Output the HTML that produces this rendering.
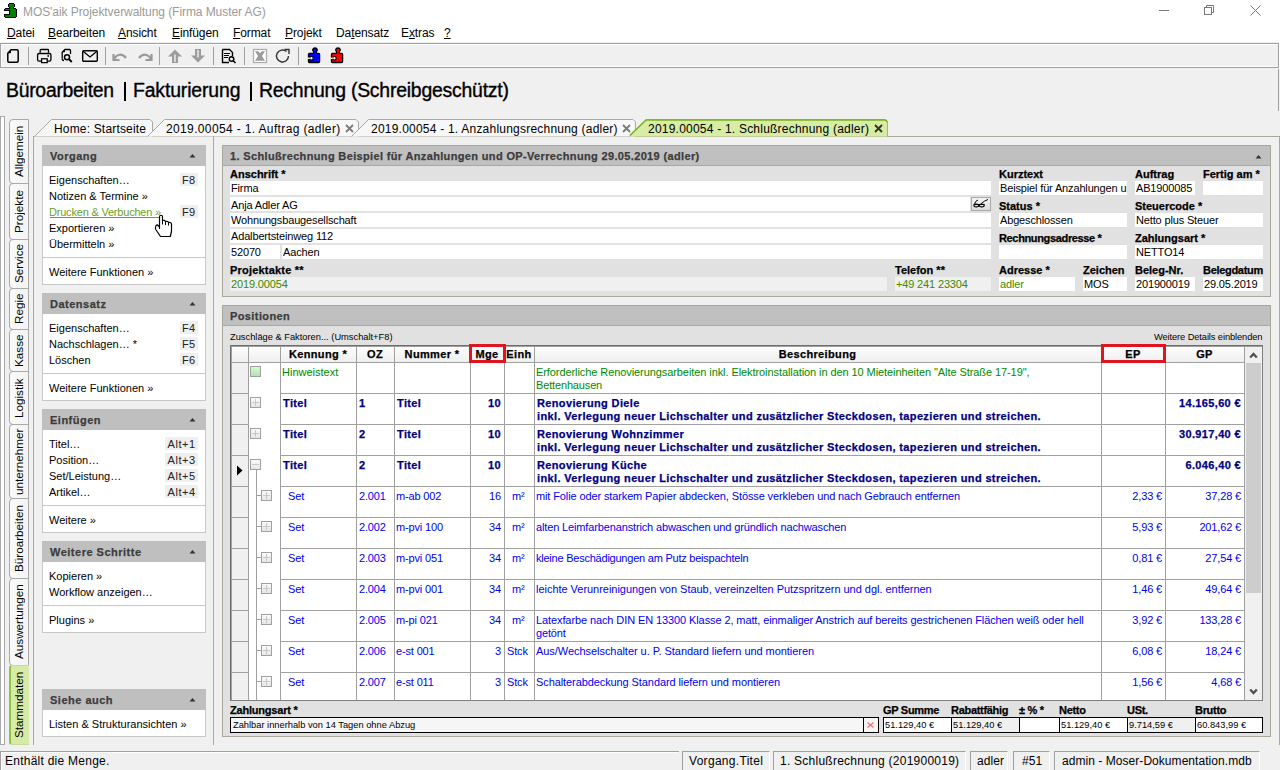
<!DOCTYPE html>
<html><head><meta charset="utf-8"><title>MOS'aik</title>
<style>
*{margin:0;padding:0;box-sizing:border-box}
html,body{width:1280px;height:770px;overflow:hidden}
body{background:#f0f0f0;font-family:"Liberation Sans",sans-serif;position:relative}
.a{position:absolute}
.t{position:absolute;white-space:nowrap}
.t[style*="font-weight:bold"]{-webkit-text-stroke-width:0.25px}
svg{position:absolute;overflow:visible}
</style></head><body>

<div class="a" style="left:0px;top:0px;width:1280px;height:42px;background:#fff"></div>
<svg style="left:3px;top:2px" width="15" height="17" viewBox="0 0 15 17" shape-rendering="crispEdges"><path d="M6 1H11V2H12V5H11V6H13V7H14V15H13V16H2V15H1V12H6V9H1V7H2V6H6V5H5V2H6z" fill="#000"/><path d="M6 2H11V5H10V7H13V15H2V13H7V8H2V7H7V5H6z" fill="#008000"/></svg>
<div class="t " style="left:23px;top:6px;font-size:12px;line-height:12px;color:#9a9a9a;letter-spacing:-0.07px">MOS'aik Projektverwaltung (Firma Muster AG)</div>
<div class="a" style="left:1159px;top:10px;width:10px;height:1px;background:#777"></div>
<svg style="left:1203px;top:4px" width="12" height="12"><rect x="1.5" y="3.5" width="7" height="7" fill="none" stroke="#777"/><path d="M3.5 3.5v-2h7v7h-2" fill="none" stroke="#777"/></svg>
<svg style="left:1250px;top:5px" width="12" height="12"><path d="M0.5 0.5l10 10M10.5 0.5l-10 10" stroke="#777" stroke-width="1"/></svg>
<div class="t " style="left:7px;top:27px;font-size:12px;line-height:12px;color:#000;letter-spacing:-0.1px"><u>D</u>atei</div>
<div class="t " style="left:48px;top:27px;font-size:12px;line-height:12px;color:#000;letter-spacing:-0.1px"><u>B</u>earbeiten</div>
<div class="t " style="left:118px;top:27px;font-size:12px;line-height:12px;color:#000;letter-spacing:-0.1px"><u>A</u>nsicht</div>
<div class="t " style="left:172px;top:27px;font-size:12px;line-height:12px;color:#000;letter-spacing:-0.1px"><u>E</u>infügen</div>
<div class="t " style="left:233px;top:27px;font-size:12px;line-height:12px;color:#000;letter-spacing:-0.1px"><u>F</u>ormat</div>
<div class="t " style="left:285px;top:27px;font-size:12px;line-height:12px;color:#000;letter-spacing:-0.1px"><u>P</u>rojekt</div>
<div class="t " style="left:336px;top:27px;font-size:12px;line-height:12px;color:#000;letter-spacing:-0.1px">Da<u>t</u>ensatz</div>
<div class="t " style="left:401px;top:27px;font-size:12px;line-height:12px;color:#000;letter-spacing:-0.1px">E<u>x</u>tras</div>
<div class="t " style="left:444px;top:27px;font-size:12px;line-height:12px;color:#000;letter-spacing:-0.1px"><u>?</u></div>
<div class="a" style="left:0px;top:43px;width:1280px;height:25px;background:#f0f0f0;border-top:1px solid #a0a0a0;border-bottom:1px solid #a0a0a0;border-left:1px solid #a0a0a0"></div>
<div class="a" style="left:1px;top:44px;width:1279px;height:23px;border-top:1px solid #fff;border-left:1px solid #fff;border-bottom:1px solid #fff"></div>
<div class="a" style="left:1278px;top:43px;width:1px;height:25px;background:#a0a0a0"></div>
<div class="a" style="left:1279px;top:43px;width:1px;height:25px;background:#fff"></div>
<div class="a" style="left:1278px;top:69px;width:1px;height:42px;background:#a0a0a0"></div>
<div class="a" style="left:28px;top:47px;width:1px;height:18px;background:#a0a0a0"></div>
<div class="a" style="left:105px;top:47px;width:1px;height:18px;background:#a0a0a0"></div>
<div class="a" style="left:159px;top:47px;width:1px;height:18px;background:#a0a0a0"></div>
<div class="a" style="left:213px;top:47px;width:1px;height:18px;background:#a0a0a0"></div>
<div class="a" style="left:244px;top:47px;width:1px;height:18px;background:#a0a0a0"></div>
<div class="a" style="left:298px;top:47px;width:1px;height:18px;background:#a0a0a0"></div>
<svg style="left:6px;top:48px" width="14" height="16" viewBox="0 0 14 16"><path d="M5 1.8h6c0.7 0 1.2 0.5 1.2 1.2v10c0 0.7-0.5 1.2-1.2 1.2h-8c-0.7 0-1.2-0.5-1.2-1.2v-7.8z" fill="none" stroke="#000" stroke-width="1.5" stroke-linejoin="round"/><path d="M1.8 5.2l3.2-3.4v2.4c0 0.6-0.4 1-1 1z" fill="#000"/></svg>
<svg style="left:36px;top:48px" width="16" height="16" viewBox="0 0 16 16"><path d="M4.2 4.8V2.2Q4.2 1.5 5 1.5H11.7Q12.5 1.5 12.5 2.2V4.8" fill="none" stroke="#000" stroke-width="1.3"/><rect x="1.6" y="5.5" width="13.3" height="7.6" rx="1.4" fill="none" stroke="#000" stroke-width="1.3"/><rect x="5.6" y="10.8" width="5.6" height="3.8" fill="#fff" stroke="#000" stroke-width="1.3"/><circle cx="12.2" cy="7.9" r="0.9" fill="#000"/></svg>
<svg style="left:60px;top:48px" width="14" height="16" viewBox="0 0 14 16"><path d="M2.2 10.5V4.3L5 1.5H9.5Q10.5 1.5 10.5 2.5V6" fill="none" stroke="#000" stroke-width="1.3"/><path d="M2.2 4.3L5 1.5V3.5Q5 4.3 4.2 4.3z" fill="#000"/><path d="M2.2 10.5Q2.2 12.5 4 12.5" fill="none" stroke="#000" stroke-width="1.3"/><circle cx="7" cy="9.2" r="2.5" fill="none" stroke="#000" stroke-width="1.5"/><path d="M8.8 11l3 3" stroke="#000" stroke-width="1.8"/></svg>
<svg style="left:81px;top:49px" width="18" height="14" viewBox="0 0 18 14"><rect x="1.7" y="1.7" width="14.6" height="10.6" rx="1" fill="none" stroke="#000" stroke-width="1.4"/><path d="M2 2.2l7 5.8 7-5.8" fill="none" stroke="#000" stroke-width="1.3"/></svg>
<svg style="left:112px;top:50px" width="18" height="12" viewBox="0 0 18 12"><path d="M2 9c3-5 8-6 12-1" fill="none" stroke="#999" stroke-width="2.2"/><path d="M1.5 4v6h6" fill="none" stroke="#999" stroke-width="2.2"/></svg>
<svg style="left:135px;top:50px" width="18" height="12" viewBox="0 0 18 12"><path d="M16 9c-3-5-8-6-12-1" fill="none" stroke="#999" stroke-width="2.2"/><path d="M16.5 4v6h-6" fill="none" stroke="#999" stroke-width="2.2"/></svg>
<svg style="left:167px;top:48px" width="16" height="16" viewBox="0 0 16 16"><path d="M1 8.5L8 1.5L15 8.5H11V15H5V8.5z" fill="#9c9c9c"/><path d="M8 6.5V14" stroke="#fff" stroke-width="1.2"/></svg>
<svg style="left:190px;top:48px" width="16" height="16" viewBox="0 0 16 16"><path d="M1 7.5L8 14.5L15 7.5H11V1H5V7.5z" fill="#9c9c9c"/><path d="M8 2V9.5" stroke="#fff" stroke-width="1.2"/></svg>
<svg style="left:221px;top:48px" width="16" height="16" viewBox="0 0 16 16"><path d="M1.5 1.5h7l3 3v3.5M8 14.5h-6.5v-13" fill="none" stroke="#000" stroke-width="1.4"/><path d="M3 5.5h6M3 7.5h5M3 9.5h4" stroke="#000" stroke-width="1"/><circle cx="10.5" cy="11" r="2.3" fill="none" stroke="#000" stroke-width="1.4"/><path d="M12 12.5l2.5 2.5" stroke="#000" stroke-width="1.6"/></svg>
<svg style="left:252px;top:48px" width="16" height="16" viewBox="0 0 16 16"><rect x="1.5" y="1.5" width="13" height="13" fill="#fff" stroke="#aaa" stroke-width="1.2"/><path d="M3 3.2H6.3L8 5.3L9.7 3.2H13L10 8L13 12.8H3L6 8z" fill="#9c9c9c"/></svg>
<svg style="left:275px;top:48px" width="16" height="16" viewBox="0 0 16 16"><path d="M13.5 8a6 6 0 1 1-2-4.5" fill="none" stroke="#333" stroke-width="1.4"/><path d="M9.5 1.5h4.5v4.5" fill="none" stroke="#333" stroke-width="1.4"/></svg>
<svg style="left:307px;top:47px" width="14" height="17" viewBox="0 0 14 17"><path d="M6.6 4.6C5.2 3.6 5.4 1 8 1S10.8 3.6 9.4 4.6V6.3H11.5Q12.6 6.3 12.6 7.4V14.4Q12.6 15.5 11.5 15.5H2.6Q1.5 15.5 1.5 14.4V7.4Q1.5 6.3 2.6 6.3H6.6z" fill="#0000ff" stroke="#000" stroke-width="1.3" stroke-linejoin="round"/><circle cx="4.4" cy="11.3" r="1.8" fill="#fff" stroke="#000" stroke-width="1.2"/><path d="M0.6 11.3H2.8" stroke="#fff" stroke-width="1.5"/></svg>
<svg style="left:330px;top:47px" width="14" height="17" viewBox="0 0 14 17"><path d="M6.6 4.6C5.2 3.6 5.4 1 8 1S10.8 3.6 9.4 4.6V6.3H11.5Q12.6 6.3 12.6 7.4V14.4Q12.6 15.5 11.5 15.5H2.6Q1.5 15.5 1.5 14.4V7.4Q1.5 6.3 2.6 6.3H6.6z" fill="#ff0000" stroke="#000" stroke-width="1.3" stroke-linejoin="round"/><circle cx="4.4" cy="11.3" r="1.8" fill="#fff" stroke="#000" stroke-width="1.2"/><path d="M0.6 11.3H2.8" stroke="#fff" stroke-width="1.5"/></svg>
<div class="t" style="left:6px;top:81px;font-size:19.4px;line-height:19.4px;color:#000;-webkit-text-stroke:0.35px #000;letter-spacing:-0.27px">Büroarbeiten</div>
<div class="a" style="left:124px;top:82px;width:2px;height:19px;background:#000"></div>
<div class="t" style="left:133px;top:81px;font-size:19.4px;line-height:19.4px;color:#000;-webkit-text-stroke:0.35px #000;letter-spacing:-0.13px">Fakturierung</div>
<div class="a" style="left:250px;top:82px;width:2px;height:19px;background:#000"></div>
<div class="t" style="left:259px;top:81px;font-size:19.4px;line-height:19.4px;color:#000;-webkit-text-stroke:0.35px #000;letter-spacing:-0.21px">Rechnung (Schreibgeschützt)</div>
<div class="a" style="left:0px;top:116px;width:5px;height:629px;border:1px solid #a8a8a8;background:#fff"></div>
<div class="a" style="left:33px;top:136px;width:1px;height:608px;background:#aca899"></div>
<div class="a" style="left:9px;top:119px;width:20px;height:65px;border:1px solid #a9a9a9;border-radius:4px 0 0 4px;background:linear-gradient(to right,#fafafa,#f3f3f3)"></div>
<div class="t" style="left:9px;top:119px;width:20px;height:65px;writing-mode:vertical-rl;transform:rotate(180deg);font-size:11.7px;line-height:20px;text-align:center;color:#000">Allgemein</div>
<div class="a" style="left:9px;top:183px;width:20px;height:57px;border:1px solid #a9a9a9;border-radius:4px 0 0 4px;background:linear-gradient(to right,#fafafa,#f3f3f3)"></div>
<div class="t" style="left:9px;top:183px;width:20px;height:57px;writing-mode:vertical-rl;transform:rotate(180deg);font-size:11.7px;line-height:20px;text-align:center;color:#000">Projekte</div>
<div class="a" style="left:9px;top:239px;width:20px;height:50px;border:1px solid #a9a9a9;border-radius:4px 0 0 4px;background:linear-gradient(to right,#fafafa,#f3f3f3)"></div>
<div class="t" style="left:9px;top:239px;width:20px;height:50px;writing-mode:vertical-rl;transform:rotate(180deg);font-size:11.7px;line-height:20px;text-align:center;color:#000">Service</div>
<div class="a" style="left:9px;top:288px;width:20px;height:42px;border:1px solid #a9a9a9;border-radius:4px 0 0 4px;background:linear-gradient(to right,#fafafa,#f3f3f3)"></div>
<div class="t" style="left:9px;top:288px;width:20px;height:42px;writing-mode:vertical-rl;transform:rotate(180deg);font-size:11.7px;line-height:20px;text-align:center;color:#000">Regie</div>
<div class="a" style="left:9px;top:329px;width:20px;height:43px;border:1px solid #a9a9a9;border-radius:4px 0 0 4px;background:linear-gradient(to right,#fafafa,#f3f3f3)"></div>
<div class="t" style="left:9px;top:329px;width:20px;height:43px;writing-mode:vertical-rl;transform:rotate(180deg);font-size:11.7px;line-height:20px;text-align:center;color:#000">Kasse</div>
<div class="a" style="left:9px;top:371px;width:20px;height:54px;border:1px solid #a9a9a9;border-radius:4px 0 0 4px;background:linear-gradient(to right,#fafafa,#f3f3f3)"></div>
<div class="t" style="left:9px;top:371px;width:20px;height:54px;writing-mode:vertical-rl;transform:rotate(180deg);font-size:11.7px;line-height:20px;text-align:center;color:#000">Logistik</div>
<div class="a" style="left:9px;top:424px;width:20px;height:75px;border:1px solid #a9a9a9;border-radius:4px 0 0 4px;background:linear-gradient(to right,#fafafa,#f3f3f3)"></div>
<div class="t" style="left:9px;top:424px;width:20px;height:75px;writing-mode:vertical-rl;transform:rotate(180deg);font-size:11.7px;line-height:20px;text-align:center;color:#000">unternehmer</div>
<div class="a" style="left:9px;top:498px;width:20px;height:81px;border:1px solid #a9a9a9;border-radius:4px 0 0 4px;background:linear-gradient(to right,#fafafa,#f3f3f3)"></div>
<div class="t" style="left:9px;top:498px;width:20px;height:81px;writing-mode:vertical-rl;transform:rotate(180deg);font-size:11.7px;line-height:20px;text-align:center;color:#000">Büroarbeiten</div>
<div class="a" style="left:9px;top:578px;width:20px;height:88px;border:1px solid #a9a9a9;border-radius:4px 0 0 4px;background:linear-gradient(to right,#fafafa,#f3f3f3)"></div>
<div class="t" style="left:9px;top:578px;width:20px;height:88px;writing-mode:vertical-rl;transform:rotate(180deg);font-size:11.7px;line-height:20px;text-align:center;color:#000">Auswertungen</div>
<div class="a" style="left:9px;top:665px;width:20px;height:80px;border:1px solid #c8dc98;border-left:2px solid #8cc63f;border-right:0;border-radius:3px 0 0 3px;background:#d8eaa8"></div>
<div class="t" style="left:9px;top:665px;width:20px;height:80px;writing-mode:vertical-rl;transform:rotate(180deg);font-size:11.7px;line-height:20px;text-align:center;color:#000">Stammdaten</div>
<div class="a" style="left:34px;top:136px;width:1245px;height:1px;background:#aca899"></div>
<div class="a" style="left:1279px;top:136px;width:1px;height:609px;background:#aca899"></div>
<svg style="left:34px;top:119px" width="120" height="18"><path d="M0.5 17.5 L17.5 0.5 H116 L118.5 3 V17.5" fill="#f7f7f7" stroke="#a9a9a9" stroke-width="1"/></svg>
<div class="t " style="left:54px;top:123px;font-size:12px;line-height:12px;color:#000;letter-spacing:0.17px">Home: Startseite</div>
<svg style="left:147px;top:119px" width="213" height="18"><path d="M0.5 17.5 L17.5 0.5 H209 L211.5 3 V17.5" fill="#f7f7f7" stroke="#a9a9a9" stroke-width="1"/></svg>
<div class="t " style="left:166px;top:123px;font-size:12px;line-height:12px;color:#000;letter-spacing:0.36px">2019.00054 - 1. Auftrag (adler)</div>
<svg style="left:345px;top:124px" width="9" height="9"><path d="M1 1l7 7M8 1l-7 7" stroke="#7a7a7a" stroke-width="1.8"/></svg>
<svg style="left:351px;top:119px" width="286" height="18"><path d="M0.5 17.5 L17.5 0.5 H282 L284.5 3 V17.5" fill="#f7f7f7" stroke="#a9a9a9" stroke-width="1"/></svg>
<div class="t " style="left:371px;top:123px;font-size:12px;line-height:12px;color:#000;letter-spacing:0.22px">2019.00054 - 1. Anzahlungsrechnung (adler)</div>
<svg style="left:622px;top:124px" width="9" height="9"><path d="M1 1l7 7M8 1l-7 7" stroke="#7a7a7a" stroke-width="1.8"/></svg>
<svg style="left:629px;top:119px" width="260" height="18"><path d="M0.5 17.5 L17.5 0.5 H256 L258.5 3 V17.5" fill="#d8eca4" stroke="#a9a9a9" stroke-width="1"/><path d="M0.8 16.5 L17 1 H256.5 L258.5 3" fill="none" stroke="#78b41e" stroke-width="1.6"/></svg>
<div class="t " style="left:648px;top:123px;font-size:12px;line-height:12px;color:#000;letter-spacing:0.22px">2019.00054 - 1. Schlußrechnung (adler)</div>
<svg style="left:874px;top:124px" width="9" height="9"><path d="M1 1l7 7M8 1l-7 7" stroke="#333" stroke-width="1.9"/></svg>
<div class="a" style="left:33px;top:136px;width:1px;height:609px;background:#aca899"></div>
<div class="a" style="left:0px;top:751px;width:679px;height:19px;background:#f0f0f0;border-top:1px solid #a0a0a0;border-left:1px solid #a0a0a0"></div>
<div class="a" style="left:1px;top:752px;width:677px;height:18px;border-top:1px solid #fff;border-left:1px solid #fff"></div>
<div class="t " style="left:5px;top:755px;font-size:12px;line-height:12px;color:#000;letter-spacing:0.25px">Enthält die Menge.</div>
<div class="a" style="left:682px;top:751px;width:88px;height:19px;border-top:1px solid #a0a0a0;border-left:1px solid #a0a0a0;border-right:1px solid #fff;background:#f0f0f0"></div>
<div class="t " style="left:689px;top:755px;font-size:12px;line-height:12px;color:#000;letter-spacing:0.3px">Vorgang.Titel</div>
<div class="a" style="left:773px;top:751px;width:193px;height:19px;border-top:1px solid #a0a0a0;border-left:1px solid #a0a0a0;border-right:1px solid #fff;background:#f0f0f0"></div>
<div class="t " style="left:780px;top:755px;font-size:12px;line-height:12px;color:#000;letter-spacing:0.25px">1. Schlußrechnung (201900019)</div>
<div class="a" style="left:970px;top:751px;width:38px;height:19px;border-top:1px solid #a0a0a0;border-left:1px solid #a0a0a0;border-right:1px solid #fff;background:#f0f0f0"></div>
<div class="t " style="left:977px;top:755px;font-size:12px;line-height:12px;color:#000;letter-spacing:0.1px">adler</div>
<div class="a" style="left:1013px;top:751px;width:37px;height:19px;border-top:1px solid #a0a0a0;border-left:1px solid #a0a0a0;border-right:1px solid #fff;background:#f0f0f0"></div>
<div class="t " style="left:1022px;top:755px;font-size:12px;line-height:12px;color:#000;letter-spacing:0.1px">#51</div>
<div class="a" style="left:1054px;top:751px;width:206px;height:19px;border-top:1px solid #a0a0a0;border-left:1px solid #a0a0a0;border-right:1px solid #fff;background:#f0f0f0"></div>
<div class="t " style="left:1062px;top:755px;font-size:12px;line-height:12px;color:#000;letter-spacing:0.05px">admin - Moser-Dokumentation.mdb</div>
<div class="a" style="left:213px;top:136px;width:1px;height:609px;background:#aca899"></div>
<div class="a" style="left:42px;top:166px;width:164px;height:119px;background:#fff;border:1px solid #c8c8c8;border-top:0"></div>
<div class="a" style="left:42px;top:314px;width:164px;height:87px;background:#fff;border:1px solid #c8c8c8;border-top:0"></div>
<div class="a" style="left:42px;top:430px;width:164px;height:103px;background:#fff;border:1px solid #c8c8c8;border-top:0"></div>
<div class="a" style="left:42px;top:562px;width:164px;height:71px;background:#fff;border:1px solid #c8c8c8;border-top:0"></div>
<div class="a" style="left:42px;top:710px;width:164px;height:27px;background:#fff;border:1px solid #c8c8c8;border-top:0"></div>
<div class="a" style="left:42px;top:145px;width:164px;height:21px;background:#bfbfbf"></div>
<div class="a" style="left:180px;top:173px;width:18px;height:13px;background:#efefef"></div>
<div class="a" style="left:180px;top:205px;width:18px;height:13px;background:#efefef"></div>
<div class="a" style="left:42px;top:257px;width:164px;height:1px;background:#c8c8c8"></div>
<div class="a" style="left:42px;top:293px;width:164px;height:21px;background:#bfbfbf"></div>
<div class="a" style="left:180px;top:321px;width:18px;height:13px;background:#efefef"></div>
<div class="a" style="left:180px;top:337px;width:18px;height:13px;background:#efefef"></div>
<div class="a" style="left:180px;top:353px;width:18px;height:13px;background:#efefef"></div>
<div class="a" style="left:42px;top:373px;width:164px;height:1px;background:#c8c8c8"></div>
<div class="a" style="left:42px;top:409px;width:164px;height:21px;background:#bfbfbf"></div>
<div class="a" style="left:165px;top:437px;width:33px;height:13px;background:#efefef"></div>
<div class="a" style="left:165px;top:453px;width:33px;height:13px;background:#efefef"></div>
<div class="a" style="left:165px;top:469px;width:33px;height:13px;background:#efefef"></div>
<div class="a" style="left:165px;top:485px;width:33px;height:13px;background:#efefef"></div>
<div class="a" style="left:42px;top:505px;width:164px;height:1px;background:#c8c8c8"></div>
<div class="a" style="left:42px;top:541px;width:164px;height:21px;background:#bfbfbf"></div>
<div class="a" style="left:42px;top:605px;width:164px;height:1px;background:#c8c8c8"></div>
<div class="a" style="left:42px;top:689px;width:164px;height:21px;background:#bfbfbf"></div>
<div class="t " style="left:50px;top:151px;font-size:11px;line-height:11px;font-weight:bold;color:#3c3c3c;letter-spacing:0.5px">Vorgang</div>
<svg style="left:189px;top:153px" width="7" height="5"><path d="M0.5 4.5l3-3.5 3 3.5z" fill="#333"/></svg>
<div class="t " style="left:182px;top:175px;font-size:11px;line-height:11px;color:#222;letter-spacing:0.4px">F8</div>
<div class="t " style="left:49px;top:175px;font-size:11px;line-height:11px;color:#000;">Eigenschaften…</div>
<div class="t " style="left:49px;top:191px;font-size:11px;line-height:11px;color:#000;">Notizen &amp; Termine »</div>
<div class="t " style="left:182px;top:207px;font-size:11px;line-height:11px;color:#222;letter-spacing:0.4px">F9</div>
<div class="t " style="left:49px;top:207px;font-size:11px;line-height:11px;color:#000;"><span style="color:#6ca01e;letter-spacing:-0.2px">Drucken &amp; Verbuchen »</span></div>
<div class="t " style="left:49px;top:223px;font-size:11px;line-height:11px;color:#000;">Exportieren »</div>
<div class="t " style="left:49px;top:239px;font-size:11px;line-height:11px;color:#000;">Übermitteln »</div>
<div class="t " style="left:49px;top:267px;font-size:11px;line-height:11px;color:#000;">Weitere Funktionen »</div>
<div class="t " style="left:50px;top:299px;font-size:11px;line-height:11px;font-weight:bold;color:#3c3c3c;letter-spacing:0.5px">Datensatz</div>
<svg style="left:189px;top:301px" width="7" height="5"><path d="M0.5 4.5l3-3.5 3 3.5z" fill="#333"/></svg>
<div class="t " style="left:182px;top:323px;font-size:11px;line-height:11px;color:#222;letter-spacing:0.4px">F4</div>
<div class="t " style="left:49px;top:323px;font-size:11px;line-height:11px;color:#000;">Eigenschaften…</div>
<div class="t " style="left:182px;top:339px;font-size:11px;line-height:11px;color:#222;letter-spacing:0.4px">F5</div>
<div class="t " style="left:49px;top:339px;font-size:11px;line-height:11px;color:#000;">Nachschlagen… *</div>
<div class="t " style="left:182px;top:355px;font-size:11px;line-height:11px;color:#222;letter-spacing:0.4px">F6</div>
<div class="t " style="left:49px;top:355px;font-size:11px;line-height:11px;color:#000;">Löschen</div>
<div class="t " style="left:49px;top:383px;font-size:11px;line-height:11px;color:#000;">Weitere Funktionen »</div>
<div class="t " style="left:50px;top:415px;font-size:11px;line-height:11px;font-weight:bold;color:#3c3c3c;letter-spacing:0.5px">Einfügen</div>
<svg style="left:189px;top:417px" width="7" height="5"><path d="M0.5 4.5l3-3.5 3 3.5z" fill="#333"/></svg>
<div class="t " style="left:167.5px;top:439px;font-size:11px;line-height:11px;color:#222;letter-spacing:0.55px">Alt+1</div>
<div class="t " style="left:49px;top:439px;font-size:11px;line-height:11px;color:#000;">Titel…</div>
<div class="t " style="left:167.5px;top:455px;font-size:11px;line-height:11px;color:#222;letter-spacing:0.55px">Alt+3</div>
<div class="t " style="left:49px;top:455px;font-size:11px;line-height:11px;color:#000;">Position…</div>
<div class="t " style="left:167.5px;top:471px;font-size:11px;line-height:11px;color:#222;letter-spacing:0.55px">Alt+5</div>
<div class="t " style="left:49px;top:471px;font-size:11px;line-height:11px;color:#000;">Set/Leistung…</div>
<div class="t " style="left:167.5px;top:487px;font-size:11px;line-height:11px;color:#222;letter-spacing:0.55px">Alt+4</div>
<div class="t " style="left:49px;top:487px;font-size:11px;line-height:11px;color:#000;">Artikel…</div>
<div class="t " style="left:49px;top:515px;font-size:11px;line-height:11px;color:#000;">Weitere »</div>
<div class="t " style="left:50px;top:547px;font-size:11px;line-height:11px;font-weight:bold;color:#3c3c3c;letter-spacing:0.5px">Weitere Schritte</div>
<svg style="left:189px;top:549px" width="7" height="5"><path d="M0.5 4.5l3-3.5 3 3.5z" fill="#333"/></svg>
<div class="t " style="left:49px;top:571px;font-size:11px;line-height:11px;color:#000;">Kopieren »</div>
<div class="t " style="left:49px;top:587px;font-size:11px;line-height:11px;color:#000;">Workflow anzeigen…</div>
<div class="t " style="left:49px;top:615px;font-size:11px;line-height:11px;color:#000;">Plugins »</div>
<div class="t " style="left:50px;top:695px;font-size:11px;line-height:11px;font-weight:bold;color:#3c3c3c;letter-spacing:0.5px">Siehe auch</div>
<svg style="left:189px;top:697px" width="7" height="5"><path d="M0.5 4.5l3-3.5 3 3.5z" fill="#333"/></svg>
<div class="t " style="left:49px;top:719px;font-size:11px;line-height:11px;color:#000;">Listen &amp; Strukturansichten »</div>
<div class="a" style="left:50px;top:217px;width:111px;height:1px;background:#6ca01e"></div>
<svg style="left:150px;top:210px" width="24" height="30" viewBox="0 0 24 30"><path d="M9.5 18.5V6.5C9.5 4.8 12.5 4.8 12.5 6.5V10.8C13 10 15.5 10 15.5 11.8C16 11 18.5 11 18.5 12.8C19 12 21.5 12.3 21.5 14.2V21.5L20.3 26.5H10.5L5.8 19.5C5.2 18.5 5.4 14.8 7.2 14.8L9.5 17z" fill="#fff" stroke="#000" stroke-width="1.2" stroke-linejoin="round"/><path d="M12.5 10.8V14.5M15.5 11.8V15M18.5 12.8V15.5" stroke="#000" stroke-width="1"/></svg>
<div class="a" style="left:222px;top:145px;width:1049px;height:152px;background:#e1e1e1;border:1px solid #aca899"></div>
<div class="a" style="left:223px;top:146px;width:1047px;height:19px;background:#c0c0c0"></div>
<div class="a" style="left:223px;top:165px;width:1047px;height:1px;background:#aca899"></div>
<div class="t " style="left:230px;top:151px;font-size:11px;line-height:11px;font-weight:bold;color:#3c3c3c;letter-spacing:0.35px">1. Schlußrechnung Beispiel für Anzahlungen und OP-Verrechnung 29.05.2019 (adler)</div>
<svg style="left:1255px;top:154px" width="7" height="5"><path d="M0.5 4.5l3-3.5 3 3.5z" fill="#333"/></svg>
<div class="t " style="left:230px;top:169px;font-size:11px;line-height:11px;font-weight:bold;color:#000;">Anschrift *</div>
<div class="t " style="left:999px;top:169px;font-size:11px;line-height:11px;font-weight:bold;color:#000;">Kurztext</div>
<div class="t " style="left:1135px;top:169px;font-size:11px;line-height:11px;font-weight:bold;color:#000;">Auftrag</div>
<div class="t " style="left:1203px;top:169px;font-size:11px;line-height:11px;font-weight:bold;color:#000;">Fertig am *</div>
<div class="a" style="left:230px;top:181px;width:761px;height:14px;background:#fff"></div>
<div class="t " style="left:231px;top:183px;font-size:11px;line-height:11px;color:#000;letter-spacing:-0.15px;overflow:hidden;width:760px">Firma</div>
<div class="a" style="left:999px;top:181px;width:128px;height:14px;background:#fff"></div>
<div class="t " style="left:1000px;top:183px;font-size:11px;line-height:11px;color:#000;letter-spacing:-0.15px;overflow:hidden;width:127px">Beispiel für Anzahlungen u</div>
<div class="a" style="left:1135px;top:181px;width:60px;height:14px;background:#fff"></div>
<div class="t " style="left:1136px;top:183px;font-size:11px;line-height:11px;color:#000;letter-spacing:-0.15px;overflow:hidden;width:59px">AB1900085</div>
<div class="a" style="left:1203px;top:181px;width:60px;height:14px;background:#fff"></div>
<div class="a" style="left:230px;top:197px;width:740px;height:14px;background:#fff"></div>
<div class="t " style="left:231px;top:200px;font-size:11px;line-height:11px;color:#000;letter-spacing:-0.15px;overflow:hidden;width:739px">Anja Adler AG</div>
<div class="a" style="left:971px;top:197px;width:20px;height:14px;background:linear-gradient(#f4f4f4,#dcdcdc);border:1px solid #a8a8a8"></div>
<svg style="left:972px;top:198px" width="18" height="13"><path d="M1.8 6.5H12.5" stroke="#000" stroke-width="1"/><ellipse cx="4.3" cy="7.5" rx="2.4" ry="1.4" fill="none" stroke="#000" stroke-width="1.1"/><ellipse cx="9.8" cy="7.5" rx="2.4" ry="1.4" fill="none" stroke="#000" stroke-width="1.1"/><path d="M2.5 6.2Q3.5 2.5 6 2M8.5 6.2Q12.5 2.5 16 1.5" fill="none" stroke="#000" stroke-width="1"/></svg>
<div class="t " style="left:999px;top:201px;font-size:11px;line-height:11px;font-weight:bold;color:#000;">Status *</div>
<div class="t " style="left:1135px;top:201px;font-size:11px;line-height:11px;font-weight:bold;color:#000;">Steuercode *</div>
<div class="a" style="left:230px;top:213px;width:761px;height:14px;background:#fff"></div>
<div class="t " style="left:231px;top:215px;font-size:11px;line-height:11px;color:#000;letter-spacing:-0.15px;overflow:hidden;width:760px">Wohnungsbaugesellschaft</div>
<div class="a" style="left:999px;top:213px;width:128px;height:14px;background:#fff"></div>
<div class="t " style="left:1000px;top:215px;font-size:11px;line-height:11px;color:#000;letter-spacing:-0.15px;overflow:hidden;width:127px">Abgeschlossen</div>
<div class="a" style="left:1135px;top:213px;width:128px;height:14px;background:#fff"></div>
<div class="t " style="left:1136px;top:215px;font-size:11px;line-height:11px;color:#000;letter-spacing:-0.15px;overflow:hidden;width:127px">Netto plus Steuer</div>
<div class="t " style="left:999px;top:233px;font-size:11px;line-height:11px;font-weight:bold;color:#000;letter-spacing:-0.35px">Rechnungsadresse *</div>
<div class="t " style="left:1135px;top:233px;font-size:11px;line-height:11px;font-weight:bold;color:#000;">Zahlungsart *</div>
<div class="a" style="left:230px;top:229px;width:761px;height:14px;background:#fff"></div>
<div class="t " style="left:231px;top:231px;font-size:11px;line-height:11px;color:#000;letter-spacing:-0.15px;overflow:hidden;width:760px">Adalbertsteinweg 112</div>
<div class="a" style="left:999px;top:245px;width:128px;height:14px;background:#fff"></div>
<div class="a" style="left:1135px;top:245px;width:128px;height:14px;background:#fff"></div>
<div class="t " style="left:1136px;top:247px;font-size:11px;line-height:11px;color:#000;letter-spacing:-0.15px;overflow:hidden;width:127px">NETTO14</div>
<div class="a" style="left:230px;top:245px;width:50px;height:14px;background:#fff"></div>
<div class="t " style="left:231px;top:247px;font-size:11px;line-height:11px;color:#000;letter-spacing:-0.15px;overflow:hidden;width:49px">52070</div>
<div class="a" style="left:282px;top:245px;width:709px;height:14px;background:#fff"></div>
<div class="t " style="left:283px;top:247px;font-size:11px;line-height:11px;color:#000;letter-spacing:-0.15px;overflow:hidden;width:708px">Aachen</div>
<div class="t " style="left:230px;top:265px;font-size:11px;line-height:11px;font-weight:bold;color:#000;letter-spacing:0.2px">Projektakte **</div>
<div class="t " style="left:895px;top:265px;font-size:11px;line-height:11px;font-weight:bold;color:#000;">Telefon **</div>
<div class="t " style="left:999px;top:265px;font-size:11px;line-height:11px;font-weight:bold;color:#000;">Adresse *</div>
<div class="t " style="left:1083px;top:265px;font-size:11px;line-height:11px;font-weight:bold;color:#000;">Zeichen</div>
<div class="t " style="left:1135px;top:265px;font-size:11px;line-height:11px;font-weight:bold;color:#000;">Beleg-Nr.</div>
<div class="t " style="left:1203px;top:265px;font-size:11px;line-height:11px;font-weight:bold;color:#000;letter-spacing:-0.3px">Belegdatum</div>
<div class="a" style="left:230px;top:277px;width:657px;height:14px;background:#f0f0f0"></div>
<div class="t " style="left:231px;top:279px;font-size:11px;line-height:11px;color:#3e8a00;letter-spacing:-0.15px;overflow:hidden;width:656px">2019.00054</div>
<div class="a" style="left:895px;top:277px;width:96px;height:14px;background:#f0f0f0"></div>
<div class="t " style="left:896px;top:279px;font-size:11px;line-height:11px;color:#3e8a00;letter-spacing:-0.15px;overflow:hidden;width:95px">+49 241 23304</div>
<div class="a" style="left:999px;top:277px;width:76px;height:14px;background:#fff"></div>
<div class="t " style="left:1000px;top:279px;font-size:11px;line-height:11px;color:#3e8a00;letter-spacing:-0.15px;overflow:hidden;width:75px">adler</div>
<div class="a" style="left:1083px;top:277px;width:44px;height:14px;background:#fff"></div>
<div class="t " style="left:1084px;top:279px;font-size:11px;line-height:11px;color:#000;letter-spacing:-0.15px;overflow:hidden;width:43px">MOS</div>
<div class="a" style="left:1135px;top:277px;width:60px;height:14px;background:#fff"></div>
<div class="t " style="left:1136px;top:279px;font-size:11px;line-height:11px;color:#000;letter-spacing:-0.15px;overflow:hidden;width:59px">201900019</div>
<div class="a" style="left:1203px;top:277px;width:60px;height:14px;background:#fff"></div>
<div class="t " style="left:1204px;top:279px;font-size:11px;line-height:11px;color:#000;letter-spacing:-0.15px;overflow:hidden;width:59px">29.05.2019</div>
<div class="a" style="left:222px;top:305px;width:1049px;height:432px;background:#e1e1e1;border:1px solid #aca899"></div>
<div class="a" style="left:223px;top:306px;width:1047px;height:19px;background:#c0c0c0"></div>
<div class="a" style="left:223px;top:325px;width:1047px;height:1px;background:#aca899"></div>
<div class="t " style="left:230px;top:311px;font-size:11px;line-height:11px;font-weight:bold;color:#3c3c3c;letter-spacing:0.4px">Positionen</div>
<div class="t " style="left:230px;top:333px;font-size:9.3px;line-height:9.3px;color:#000;">Zuschläge &amp; Faktoren... (Umschalt+F8)</div>
<div class="t " style="left:1154px;top:333px;font-size:9.3px;line-height:9.3px;color:#000;letter-spacing:-0.1px">Weitere Details einblenden</div>
<div class="a" style="left:230px;top:345px;width:1033px;height:356px;background:#fff;border:1px solid #6d6d6d;border-right-color:#808080;border-bottom-color:#808080"></div>
<div class="a" style="left:231px;top:346px;width:1031px;height:354px;border-top:1px solid #a0a0a0;border-left:1px solid #a0a0a0"></div>
<div class="a" style="left:232px;top:347px;width:1012px;height:15px;background:linear-gradient(#fdfdfd,#efefef)"></div>
<div class="a" style="left:232px;top:362px;width:1012px;height:1px;background:#a0a0a0"></div>
<div class="a" style="left:232px;top:363px;width:16px;height:337px;background:#f0f0f0"></div>
<div class="a" style="left:248px;top:346px;width:1px;height:354px;background:#a0a0a0"></div>
<div class="a" style="left:280px;top:346px;width:1px;height:354px;background:#a0a0a0"></div>
<div class="a" style="left:356px;top:346px;width:1px;height:354px;background:#a0a0a0"></div>
<div class="a" style="left:394px;top:346px;width:1px;height:354px;background:#a0a0a0"></div>
<div class="a" style="left:470px;top:346px;width:1px;height:354px;background:#a0a0a0"></div>
<div class="a" style="left:504px;top:346px;width:1px;height:354px;background:#a0a0a0"></div>
<div class="a" style="left:534px;top:346px;width:1px;height:354px;background:#a0a0a0"></div>
<div class="a" style="left:1101px;top:346px;width:1px;height:354px;background:#a0a0a0"></div>
<div class="a" style="left:1165px;top:346px;width:1px;height:354px;background:#a0a0a0"></div>
<div class="a" style="left:1244px;top:346px;width:1px;height:354px;background:#a0a0a0"></div>
<div class="a" style="left:232px;top:393px;width:16px;height:1px;background:#a0a0a0"></div>
<div class="a" style="left:280px;top:393px;width:964px;height:1px;background:#a0a0a0"></div>
<div class="a" style="left:232px;top:424px;width:16px;height:1px;background:#a0a0a0"></div>
<div class="a" style="left:280px;top:424px;width:964px;height:1px;background:#a0a0a0"></div>
<div class="a" style="left:232px;top:455px;width:16px;height:1px;background:#a0a0a0"></div>
<div class="a" style="left:280px;top:455px;width:964px;height:1px;background:#a0a0a0"></div>
<div class="a" style="left:232px;top:486px;width:16px;height:1px;background:#a0a0a0"></div>
<div class="a" style="left:280px;top:486px;width:964px;height:1px;background:#a0a0a0"></div>
<div class="a" style="left:232px;top:517px;width:16px;height:1px;background:#a0a0a0"></div>
<div class="a" style="left:280px;top:517px;width:964px;height:1px;background:#a0a0a0"></div>
<div class="a" style="left:232px;top:548px;width:16px;height:1px;background:#a0a0a0"></div>
<div class="a" style="left:280px;top:548px;width:964px;height:1px;background:#a0a0a0"></div>
<div class="a" style="left:232px;top:579px;width:16px;height:1px;background:#a0a0a0"></div>
<div class="a" style="left:280px;top:579px;width:964px;height:1px;background:#a0a0a0"></div>
<div class="a" style="left:232px;top:610px;width:16px;height:1px;background:#a0a0a0"></div>
<div class="a" style="left:280px;top:610px;width:964px;height:1px;background:#a0a0a0"></div>
<div class="a" style="left:232px;top:641px;width:16px;height:1px;background:#a0a0a0"></div>
<div class="a" style="left:280px;top:641px;width:964px;height:1px;background:#a0a0a0"></div>
<div class="a" style="left:232px;top:672px;width:16px;height:1px;background:#a0a0a0"></div>
<div class="a" style="left:280px;top:672px;width:964px;height:1px;background:#a0a0a0"></div>
<div class="a" style="left:1245px;top:347px;width:17px;height:353px;background:#f0f0f0"></div>
<div class="a" style="left:1246px;top:363px;width:15px;height:230px;background:#cdcdcd"></div>
<svg style="left:1249px;top:351px" width="10" height="8"><path d="M1.2 6.5L4.5 3 7.8 6.5" fill="none" stroke="#505050" stroke-width="2.3"/></svg>
<svg style="left:1249px;top:688px" width="10" height="8"><path d="M1.2 1.5L4.5 5 7.8 1.5" fill="none" stroke="#505050" stroke-width="2.3"/></svg>
<div class="t" style="left:280px;top:349px;width:76px;text-align:center;font-size:11px;line-height:11px;font-weight:bold;color:#000;letter-spacing:0.36px">Kennung *</div>
<div class="t" style="left:356px;top:349px;width:38px;text-align:center;font-size:11px;line-height:11px;font-weight:bold;color:#000;letter-spacing:0.36px">OZ</div>
<div class="t" style="left:394px;top:349px;width:76px;text-align:center;font-size:11px;line-height:11px;font-weight:bold;color:#000;letter-spacing:0.36px">Nummer *</div>
<div class="t" style="left:470px;top:349px;width:34px;text-align:center;font-size:11px;line-height:11px;font-weight:bold;color:#000;letter-spacing:0.36px">Mge</div>
<div class="t" style="left:504px;top:349px;width:30px;text-align:center;font-size:11px;line-height:11px;font-weight:bold;color:#000;letter-spacing:0.36px">Einh</div>
<div class="t" style="left:534px;top:349px;width:567px;text-align:center;font-size:11px;line-height:11px;font-weight:bold;color:#000;letter-spacing:0.36px">Beschreibung</div>
<div class="t" style="left:1101px;top:349px;width:64px;text-align:center;font-size:11px;line-height:11px;font-weight:bold;color:#000;letter-spacing:0.36px">EP</div>
<div class="t" style="left:1165px;top:349px;width:79px;text-align:center;font-size:11px;line-height:11px;font-weight:bold;color:#000;letter-spacing:0.36px">GP</div>
<div class="a" style="left:469px;top:344px;width:37px;height:19px;border:3px solid #e0141e"></div>
<div class="a" style="left:1101px;top:344px;width:65px;height:19px;border:3px solid #e0141e"></div>
<div class="a" style="left:250px;top:366px;width:11px;height:11px;background:linear-gradient(#d8f8d8,#a8e8a8);border:1px solid #a0a0a0"></div>
<div class="t " style="left:282px;top:367px;font-size:11px;line-height:11px;color:#008a00;">Hinweistext</div>
<div class="t " style="left:536px;top:367px;font-size:11px;line-height:11px;color:#008a00;letter-spacing:-0.08px">Erforderliche Renovierungsarbeiten inkl. Elektroinstallation in den 10 Mieteinheiten "Alte Straße 17-19",</div>
<div class="t " style="left:536px;top:380px;font-size:11px;line-height:11px;color:#008a00;letter-spacing:-0.15px">Bettenhausen</div>
<div class="a" style="left:250px;top:397px;width:11px;height:11px;background:linear-gradient(#fafafa,#e6e6e6);border:1px solid #a0a0a0"></div>
<div class="a" style="left:252px;top:402px;width:7px;height:1px;background:#c8c8c8"></div>
<div class="a" style="left:255px;top:399px;width:1px;height:7px;background:#c8c8c8"></div>
<div class="t " style="left:283px;top:398px;font-size:11px;line-height:11px;font-weight:bold;color:#000080;letter-spacing:0.36px">Titel</div>
<div class="t " style="left:359px;top:398px;font-size:11px;line-height:11px;font-weight:bold;color:#000080;letter-spacing:0.36px">1</div>
<div class="t " style="left:397px;top:398px;font-size:11px;line-height:11px;font-weight:bold;color:#000080;letter-spacing:0.36px">Titel</div>
<div class="t" style="right:779px;top:398px;font-size:11px;line-height:11px;font-weight:bold;color:#000080;letter-spacing:0.36px">10</div>
<div class="t " style="left:537px;top:398px;font-size:11px;line-height:11px;font-weight:bold;color:#000080;letter-spacing:0.36px">Renovierung Diele</div>
<div class="t " style="left:537px;top:411px;font-size:11px;line-height:11px;font-weight:bold;color:#000080;letter-spacing:0.36px">inkl. Verlegung neuer Lichschalter und zusätzlicher Steckdosen, tapezieren und streichen.</div>
<div class="t" style="right:39px;top:398px;font-size:11px;line-height:11px;font-weight:bold;color:#000080;letter-spacing:0.36px">14.165,60 €</div>
<div class="a" style="left:250px;top:428px;width:11px;height:11px;background:linear-gradient(#fafafa,#e6e6e6);border:1px solid #a0a0a0"></div>
<div class="a" style="left:252px;top:433px;width:7px;height:1px;background:#c8c8c8"></div>
<div class="a" style="left:255px;top:430px;width:1px;height:7px;background:#c8c8c8"></div>
<div class="t " style="left:283px;top:429px;font-size:11px;line-height:11px;font-weight:bold;color:#000080;letter-spacing:0.36px">Titel</div>
<div class="t " style="left:359px;top:429px;font-size:11px;line-height:11px;font-weight:bold;color:#000080;letter-spacing:0.36px">2</div>
<div class="t " style="left:397px;top:429px;font-size:11px;line-height:11px;font-weight:bold;color:#000080;letter-spacing:0.36px">Titel</div>
<div class="t" style="right:779px;top:429px;font-size:11px;line-height:11px;font-weight:bold;color:#000080;letter-spacing:0.36px">10</div>
<div class="t " style="left:537px;top:429px;font-size:11px;line-height:11px;font-weight:bold;color:#000080;letter-spacing:0.36px">Renovierung Wohnzimmer</div>
<div class="t " style="left:537px;top:442px;font-size:11px;line-height:11px;font-weight:bold;color:#000080;letter-spacing:0.36px">inkl. Verlegung neuer Lichschalter und zusätzlicher Steckdosen, tapezieren und streichen.</div>
<div class="t" style="right:39px;top:429px;font-size:11px;line-height:11px;font-weight:bold;color:#000080;letter-spacing:0.36px">30.917,40 €</div>
<div class="a" style="left:250px;top:459px;width:11px;height:11px;background:linear-gradient(#fafafa,#e6e6e6);border:1px solid #a0a0a0"></div>
<div class="a" style="left:252px;top:464px;width:7px;height:1px;background:#c8c8c8"></div>
<div class="t " style="left:283px;top:460px;font-size:11px;line-height:11px;font-weight:bold;color:#000080;letter-spacing:0.36px">Titel</div>
<div class="t " style="left:359px;top:460px;font-size:11px;line-height:11px;font-weight:bold;color:#000080;letter-spacing:0.36px">2</div>
<div class="t " style="left:397px;top:460px;font-size:11px;line-height:11px;font-weight:bold;color:#000080;letter-spacing:0.36px">Titel</div>
<div class="t" style="right:779px;top:460px;font-size:11px;line-height:11px;font-weight:bold;color:#000080;letter-spacing:0.36px">10</div>
<div class="t " style="left:537px;top:460px;font-size:11px;line-height:11px;font-weight:bold;color:#000080;letter-spacing:0.36px">Renovierung Küche</div>
<div class="t " style="left:537px;top:473px;font-size:11px;line-height:11px;font-weight:bold;color:#000080;letter-spacing:0.36px">inkl. Verlegung neuer Lichschalter und zusätzlicher Steckdosen, tapezieren und streichen.</div>
<div class="t" style="right:39px;top:460px;font-size:11px;line-height:11px;font-weight:bold;color:#000080;letter-spacing:0.36px">6.046,40 €</div>
<svg style="left:237px;top:465px" width="7" height="11"><path d="M0 0.5v10l5.5-5z" fill="#000"/></svg>
<div class="a" style="left:256px;top:470px;width:1px;height:230px;background:#a0a0a0"></div>
<div class="a" style="left:257px;top:495px;width:4px;height:1px;background:#a0a0a0"></div>
<div class="a" style="left:261px;top:490px;width:11px;height:11px;background:linear-gradient(#fafafa,#e6e6e6);border:1px solid #a0a0a0"></div>
<div class="a" style="left:263px;top:495px;width:7px;height:1px;background:#c8c8c8"></div>
<div class="a" style="left:266px;top:492px;width:1px;height:7px;background:#c8c8c8"></div>
<div class="t " style="left:288px;top:491px;font-size:11px;line-height:11px;color:#0000f0;letter-spacing:-0.15px">Set</div>
<div class="t " style="left:359px;top:491px;font-size:11px;line-height:11px;color:#0000f0;letter-spacing:-0.15px">2.001</div>
<div class="t " style="left:396px;top:491px;font-size:11px;line-height:11px;color:#0000f0;letter-spacing:-0.15px">m-ab 002</div>
<div class="t" style="right:779px;top:491px;font-size:11px;line-height:11px;color:#0000f0;letter-spacing:-0.15px">16</div>
<div class="t " style="left:512px;top:491px;font-size:11px;line-height:11px;color:#0000f0;letter-spacing:-0.15px">m²</div>
<div class="t " style="left:536px;top:491px;font-size:11px;line-height:11px;color:#0000f0;letter-spacing:-0.12px">mit Folie oder starkem Papier abdecken, Stösse verkleben und nach Gebrauch entfernen</div>
<div class="t" style="right:118px;top:491px;font-size:11px;line-height:11px;color:#0000f0;letter-spacing:-0.15px">2,33 €</div>
<div class="t" style="right:39px;top:491px;font-size:11px;line-height:11px;color:#0000f0;letter-spacing:-0.15px">37,28 €</div>
<div class="a" style="left:257px;top:526px;width:4px;height:1px;background:#a0a0a0"></div>
<div class="a" style="left:261px;top:521px;width:11px;height:11px;background:linear-gradient(#fafafa,#e6e6e6);border:1px solid #a0a0a0"></div>
<div class="a" style="left:263px;top:526px;width:7px;height:1px;background:#c8c8c8"></div>
<div class="a" style="left:266px;top:523px;width:1px;height:7px;background:#c8c8c8"></div>
<div class="t " style="left:288px;top:522px;font-size:11px;line-height:11px;color:#0000f0;letter-spacing:-0.15px">Set</div>
<div class="t " style="left:359px;top:522px;font-size:11px;line-height:11px;color:#0000f0;letter-spacing:-0.15px">2.002</div>
<div class="t " style="left:396px;top:522px;font-size:11px;line-height:11px;color:#0000f0;letter-spacing:-0.15px">m-pvi 100</div>
<div class="t" style="right:779px;top:522px;font-size:11px;line-height:11px;color:#0000f0;letter-spacing:-0.15px">34</div>
<div class="t " style="left:512px;top:522px;font-size:11px;line-height:11px;color:#0000f0;letter-spacing:-0.15px">m²</div>
<div class="t " style="left:536px;top:522px;font-size:11px;line-height:11px;color:#0000f0;letter-spacing:-0.14px">alten Leimfarbenanstrich abwaschen und gründlich nachwaschen</div>
<div class="t" style="right:118px;top:522px;font-size:11px;line-height:11px;color:#0000f0;letter-spacing:-0.15px">5,93 €</div>
<div class="t" style="right:39px;top:522px;font-size:11px;line-height:11px;color:#0000f0;letter-spacing:-0.15px">201,62 €</div>
<div class="a" style="left:257px;top:557px;width:4px;height:1px;background:#a0a0a0"></div>
<div class="a" style="left:261px;top:552px;width:11px;height:11px;background:linear-gradient(#fafafa,#e6e6e6);border:1px solid #a0a0a0"></div>
<div class="a" style="left:263px;top:557px;width:7px;height:1px;background:#c8c8c8"></div>
<div class="a" style="left:266px;top:554px;width:1px;height:7px;background:#c8c8c8"></div>
<div class="t " style="left:288px;top:553px;font-size:11px;line-height:11px;color:#0000f0;letter-spacing:-0.15px">Set</div>
<div class="t " style="left:359px;top:553px;font-size:11px;line-height:11px;color:#0000f0;letter-spacing:-0.15px">2.003</div>
<div class="t " style="left:396px;top:553px;font-size:11px;line-height:11px;color:#0000f0;letter-spacing:-0.15px">m-pvi 051</div>
<div class="t" style="right:779px;top:553px;font-size:11px;line-height:11px;color:#0000f0;letter-spacing:-0.15px">34</div>
<div class="t " style="left:512px;top:553px;font-size:11px;line-height:11px;color:#0000f0;letter-spacing:-0.15px">m²</div>
<div class="t " style="left:536px;top:553px;font-size:11px;line-height:11px;color:#0000f0;letter-spacing:-0.23px">kleine Beschädigungen am Putz beispachteln</div>
<div class="t" style="right:118px;top:553px;font-size:11px;line-height:11px;color:#0000f0;letter-spacing:-0.15px">0,81 €</div>
<div class="t" style="right:39px;top:553px;font-size:11px;line-height:11px;color:#0000f0;letter-spacing:-0.15px">27,54 €</div>
<div class="a" style="left:257px;top:588px;width:4px;height:1px;background:#a0a0a0"></div>
<div class="a" style="left:261px;top:583px;width:11px;height:11px;background:linear-gradient(#fafafa,#e6e6e6);border:1px solid #a0a0a0"></div>
<div class="a" style="left:263px;top:588px;width:7px;height:1px;background:#c8c8c8"></div>
<div class="a" style="left:266px;top:585px;width:1px;height:7px;background:#c8c8c8"></div>
<div class="t " style="left:288px;top:584px;font-size:11px;line-height:11px;color:#0000f0;letter-spacing:-0.15px">Set</div>
<div class="t " style="left:359px;top:584px;font-size:11px;line-height:11px;color:#0000f0;letter-spacing:-0.15px">2.004</div>
<div class="t " style="left:396px;top:584px;font-size:11px;line-height:11px;color:#0000f0;letter-spacing:-0.15px">m-pvi 001</div>
<div class="t" style="right:779px;top:584px;font-size:11px;line-height:11px;color:#0000f0;letter-spacing:-0.15px">34</div>
<div class="t " style="left:512px;top:584px;font-size:11px;line-height:11px;color:#0000f0;letter-spacing:-0.15px">m²</div>
<div class="t " style="left:536px;top:584px;font-size:11px;line-height:11px;color:#0000f0;letter-spacing:-0.03px">leichte Verunreinigungen von Staub, vereinzelten Putzspritzern und dgl. entfernen</div>
<div class="t" style="right:118px;top:584px;font-size:11px;line-height:11px;color:#0000f0;letter-spacing:-0.15px">1,46 €</div>
<div class="t" style="right:39px;top:584px;font-size:11px;line-height:11px;color:#0000f0;letter-spacing:-0.15px">49,64 €</div>
<div class="a" style="left:257px;top:619px;width:4px;height:1px;background:#a0a0a0"></div>
<div class="a" style="left:261px;top:614px;width:11px;height:11px;background:linear-gradient(#fafafa,#e6e6e6);border:1px solid #a0a0a0"></div>
<div class="a" style="left:263px;top:619px;width:7px;height:1px;background:#c8c8c8"></div>
<div class="a" style="left:266px;top:616px;width:1px;height:7px;background:#c8c8c8"></div>
<div class="t " style="left:288px;top:615px;font-size:11px;line-height:11px;color:#0000f0;letter-spacing:-0.15px">Set</div>
<div class="t " style="left:359px;top:615px;font-size:11px;line-height:11px;color:#0000f0;letter-spacing:-0.15px">2.005</div>
<div class="t " style="left:396px;top:615px;font-size:11px;line-height:11px;color:#0000f0;letter-spacing:-0.15px">m-pi 021</div>
<div class="t" style="right:779px;top:615px;font-size:11px;line-height:11px;color:#0000f0;letter-spacing:-0.15px">34</div>
<div class="t " style="left:512px;top:615px;font-size:11px;line-height:11px;color:#0000f0;letter-spacing:-0.15px">m²</div>
<div class="t " style="left:536px;top:615px;font-size:11px;line-height:11px;color:#0000f0;letter-spacing:-0.1px">Latexfarbe nach DIN EN 13300 Klasse 2, matt, einmaliger Anstrich auf bereits gestrichenen Flächen weiß oder hell</div>
<div class="t " style="left:536px;top:628px;font-size:11px;line-height:11px;color:#0000f0;letter-spacing:-0.15px">getönt</div>
<div class="t" style="right:118px;top:615px;font-size:11px;line-height:11px;color:#0000f0;letter-spacing:-0.15px">3,92 €</div>
<div class="t" style="right:39px;top:615px;font-size:11px;line-height:11px;color:#0000f0;letter-spacing:-0.15px">133,28 €</div>
<div class="a" style="left:257px;top:650px;width:4px;height:1px;background:#a0a0a0"></div>
<div class="a" style="left:261px;top:645px;width:11px;height:11px;background:linear-gradient(#fafafa,#e6e6e6);border:1px solid #a0a0a0"></div>
<div class="a" style="left:263px;top:650px;width:7px;height:1px;background:#c8c8c8"></div>
<div class="a" style="left:266px;top:647px;width:1px;height:7px;background:#c8c8c8"></div>
<div class="t " style="left:288px;top:646px;font-size:11px;line-height:11px;color:#0000f0;letter-spacing:-0.15px">Set</div>
<div class="t " style="left:359px;top:646px;font-size:11px;line-height:11px;color:#0000f0;letter-spacing:-0.15px">2.006</div>
<div class="t " style="left:396px;top:646px;font-size:11px;line-height:11px;color:#0000f0;letter-spacing:-0.15px">e-st 001</div>
<div class="t" style="right:779px;top:646px;font-size:11px;line-height:11px;color:#0000f0;letter-spacing:-0.15px">3</div>
<div class="t " style="left:507px;top:646px;font-size:11px;line-height:11px;color:#0000f0;letter-spacing:-0.15px">Stck</div>
<div class="t " style="left:536px;top:646px;font-size:11px;line-height:11px;color:#0000f0;letter-spacing:-0.05px">Aus/Wechselschalter u. P. Standard liefern und montieren</div>
<div class="t" style="right:118px;top:646px;font-size:11px;line-height:11px;color:#0000f0;letter-spacing:-0.15px">6,08 €</div>
<div class="t" style="right:39px;top:646px;font-size:11px;line-height:11px;color:#0000f0;letter-spacing:-0.15px">18,24 €</div>
<div class="a" style="left:257px;top:681px;width:4px;height:1px;background:#a0a0a0"></div>
<div class="a" style="left:261px;top:676px;width:11px;height:11px;background:linear-gradient(#fafafa,#e6e6e6);border:1px solid #a0a0a0"></div>
<div class="a" style="left:263px;top:681px;width:7px;height:1px;background:#c8c8c8"></div>
<div class="a" style="left:266px;top:678px;width:1px;height:7px;background:#c8c8c8"></div>
<div class="t " style="left:288px;top:677px;font-size:11px;line-height:11px;color:#0000f0;letter-spacing:-0.15px">Set</div>
<div class="t " style="left:359px;top:677px;font-size:11px;line-height:11px;color:#0000f0;letter-spacing:-0.15px">2.007</div>
<div class="t " style="left:396px;top:677px;font-size:11px;line-height:11px;color:#0000f0;letter-spacing:-0.15px">e-st 011</div>
<div class="t" style="right:779px;top:677px;font-size:11px;line-height:11px;color:#0000f0;letter-spacing:-0.15px">3</div>
<div class="t " style="left:507px;top:677px;font-size:11px;line-height:11px;color:#0000f0;letter-spacing:-0.15px">Stck</div>
<div class="t " style="left:536px;top:677px;font-size:11px;line-height:11px;color:#0000f0;letter-spacing:-0.09px">Schalterabdeckung Standard liefern und montieren</div>
<div class="t" style="right:118px;top:677px;font-size:11px;line-height:11px;color:#0000f0;letter-spacing:-0.15px">1,56 €</div>
<div class="t" style="right:39px;top:677px;font-size:11px;line-height:11px;color:#0000f0;letter-spacing:-0.15px">4,68 €</div>
<div class="t " style="left:230px;top:705px;font-size:11px;line-height:11px;font-weight:bold;color:#000;letter-spacing:-0.2px">Zahlungsart *</div>
<div class="a" style="left:230px;top:717px;width:634px;height:16px;background:#f6f6f6;border:1px solid #000"></div>
<div class="t " style="left:233px;top:721px;font-size:9.3px;line-height:9.3px;color:#000;">Zahlbar innerhalb von 14 Tagen ohne Abzug</div>
<div class="a" style="left:863px;top:717px;width:16px;height:16px;background:#f6f6f6;border:1px solid #000"></div>
<svg style="left:866px;top:721px" width="9" height="8"><path d="M1.5 1.5l6 5M7.5 1.5l-6 5" stroke="#f06a6a" stroke-width="1.1"/></svg>
<div class="t " style="left:883px;top:705px;font-size:11px;line-height:11px;font-weight:bold;color:#000;letter-spacing:-0.3px">GP Summe</div>
<div class="a" style="left:883px;top:717px;width:69px;height:16px;background:#fff;border:1px solid #000"></div>
<div class="t " style="left:885px;top:721px;font-size:9.3px;line-height:9.3px;color:#000;">51.129,40 €</div>
<div class="t " style="left:951px;top:705px;font-size:11px;line-height:11px;font-weight:bold;color:#000;letter-spacing:-0.3px">Rabattfähig</div>
<div class="a" style="left:951px;top:717px;width:69px;height:16px;background:#f0f0f0;border:1px solid #000"></div>
<div class="t " style="left:953px;top:721px;font-size:9.3px;line-height:9.3px;color:#000;">51.129,40 €</div>
<div class="t " style="left:1019px;top:705px;font-size:11px;line-height:11px;font-weight:bold;color:#000;letter-spacing:-0.3px">± % *</div>
<div class="a" style="left:1019px;top:717px;width:41px;height:16px;background:#fff;border:1px solid #000"></div>
<div class="t " style="left:1059px;top:705px;font-size:11px;line-height:11px;font-weight:bold;color:#000;letter-spacing:-0.3px">Netto</div>
<div class="a" style="left:1059px;top:717px;width:69px;height:16px;background:#fff;border:1px solid #000"></div>
<div class="t " style="left:1061px;top:721px;font-size:9.3px;line-height:9.3px;color:#000;">51.129,40 €</div>
<div class="t " style="left:1127px;top:705px;font-size:11px;line-height:11px;font-weight:bold;color:#000;letter-spacing:-0.3px">USt.</div>
<div class="a" style="left:1127px;top:717px;width:69px;height:16px;background:#f0f0f0;border:1px solid #000"></div>
<div class="t " style="left:1129px;top:721px;font-size:9.3px;line-height:9.3px;color:#000;">9.714,59 €</div>
<div class="t " style="left:1195px;top:705px;font-size:11px;line-height:11px;font-weight:bold;color:#000;letter-spacing:-0.3px">Brutto</div>
<div class="a" style="left:1195px;top:717px;width:68px;height:16px;background:#fff;border:1px solid #000"></div>
<div class="t " style="left:1197px;top:721px;font-size:9.3px;line-height:9.3px;color:#000;">60.843,99 €</div>
</body></html>
